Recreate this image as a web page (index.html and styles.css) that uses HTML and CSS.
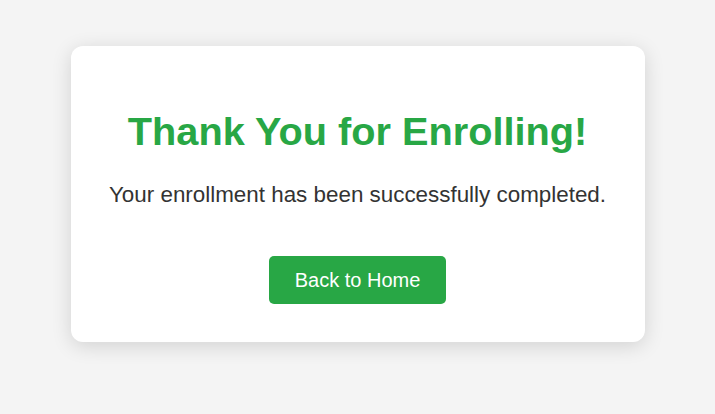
FILE: index.html
```html
<!DOCTYPE html>
<html lang="en">
<head>
<meta charset="utf-8">
<title>Enrollment Complete</title>
<link rel="stylesheet" href="styles.css">
</head>
<body>
  <main class="card">
    <h1 class="title">Thank You for Enrolling!</h1>
    <p class="message">Your enrollment has been successfully completed.</p>
    <div class="actions">
      <a class="btn" href="#">Back to Home</a>
    </div>
  </main>
</body>
</html>
```

FILE: styles.css
```css
html, body {
  margin: 0;
  padding: 0;
}
body {
  min-height: 414px;
  background: #f4f4f4;
  font-family: "Liberation Sans", Arial, sans-serif;
}
.card {
  box-sizing: border-box;
  width: 574px;
  margin: 46px auto 0;
  padding: 40px 30px 38px;
  background: #fff;
  border-radius: 12px;
  box-shadow: 0 4px 20px rgba(0, 0, 0, 0.14);
  text-align: center;
}
.title {
  margin: 23px 0 0;
  font-size: 39.7px;
  font-weight: bold;
  color: #28a745;
}
.message {
  margin: 28px 0 48px;
  font-size: 22.4px;
  color: #333;
}
.actions {
  display: flex;
  justify-content: center;
}
.btn {
  display: block;
  padding: 12px 26px;
  font-size: 20px;
  line-height: 24px;
  color: #fff;
  background: #28a745;
  border-radius: 5px;
  text-decoration: none;
}
```
